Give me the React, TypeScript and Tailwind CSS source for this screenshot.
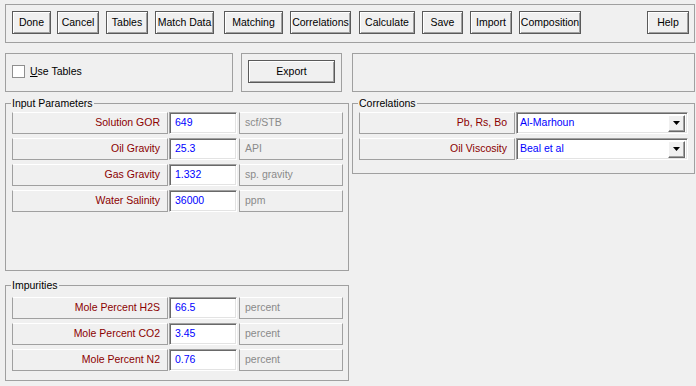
import React from 'react';

const toolbar = [
  { name: 'Done', cls: 'w-[39px]' },
  { name: 'Cancel', cls: 'w-[42px] ml-[6px]' },
  { name: 'Tables', cls: 'w-[42px] ml-[7px]' },
  { name: 'Match Data', cls: 'w-[59px] ml-[7px]' },
  { name: 'Matching', cls: 'w-[59px] ml-[10px]' },
  { name: 'Correlations', cls: 'w-[61px] ml-[7px]' },
  { name: 'Calculate', cls: 'w-[56px] ml-[8px]' },
  { name: 'Save', cls: 'w-[41px] ml-[7px]' },
  { name: 'Import', cls: 'w-[42px] ml-[7px]' },
  { name: 'Composition', cls: 'w-[62px] ml-[7px]' },
  { name: 'Help', cls: 'w-[42px] ml-auto' },
];

const inputParams = [
  { label: 'Solution GOR', value: '649', unit: 'scf/STB' },
  { label: 'Oil Gravity', value: '25.3', unit: 'API' },
  { label: 'Gas Gravity', value: '1.332', unit: 'sp. gravity' },
  { label: 'Water Salinity', value: '36000', unit: 'ppm' },
];

const impurities = [
  { label: 'Mole Percent H2S', value: '66.5', unit: 'percent' },
  { label: 'Mole Percent CO2', value: '3.45', unit: 'percent' },
  { label: 'Mole Percent N2', value: '0.76', unit: 'percent' },
];

const correlations = [
  { label: 'Pb, Rs, Bo', value: 'Al-Marhoun' },
  { label: 'Oil Viscosity', value: 'Beal et al' },
];

const Btn = ({ children, className = '' }: { children: React.ReactNode; className?: string }) => (
  <div
    className={`h-[23px] flex items-center justify-center border border-[#5a5a5a] bg-[#f0f0f0] shadow-[inset_1px_1px_0_#ffffff,inset_-1px_-1px_0_#a0a0a0] ${className}`}
  >
    {children}
  </div>
);

const Group = ({ title, className, children }: { title: string; className: string; children?: React.ReactNode }) => (
  <div className={`border border-[#a0a0a0] ${className}`}>
    <div className="-mt-[8px] ml-[5px] w-fit px-[1px] h-[14px] leading-[14px] bg-[#f0f0f0]">{title}</div>
    {children}
  </div>
);

const LabelCell = ({ text }: { text: string }) => (
  <div className="w-[156px] h-[22px] flex items-center justify-end pr-[7px] text-[#8b0000] border border-[#a0a0a0] border-t-white">
    {text}
  </div>
);

const ParamRow = ({ label, value, unit }: { label: string; value: string; unit: string }) => (
  <div className="flex h-[22px]">
    <LabelCell text={label} />
    <div className="ml-[1px] w-[68px] h-[22px] flex items-center pl-[5px] bg-white text-[#0000ff] border border-[#a0a0a0] border-b-white border-r-white shadow-[inset_1px_1px_0_#696969,inset_-1px_-1px_0_#e3e3e3]">
      {value}
    </div>
    <div className="ml-[2px] w-[104px] h-[22px] flex items-center pl-[5px] text-[#8a8a8a] border border-[#a0a0a0] border-t-white">
      {unit}
    </div>
  </div>
);

const ComboRow = ({ label, value }: { label: string; value: string }) => (
  <div className="flex h-[22px]">
    <LabelCell text={label} />
    <div className="ml-[1px] w-[172px] h-[22px] flex items-center pl-[3px] pr-[2px] bg-white text-[#0000ff] border border-[#a0a0a0] border-b-white border-r-white shadow-[inset_1px_1px_0_#696969,inset_-1px_-1px_0_#e3e3e3]">
      <span>{value}</span>
      <div className="ml-auto w-[17px] h-[17px] flex items-center justify-center bg-[#f0f0f0] border border-white border-b-[#696969] border-r-[#696969] shadow-[inset_-1px_-1px_0_#a0a0a0]">
        <svg width="7" height="4" viewBox="0 0 7 4">
          <path d="M0 0h7L3.5 4z" fill="#000" />
        </svg>
      </div>
    </div>
  </div>
);

export default function App() {
  return (
    <div className="w-[696px] h-[386px] overflow-hidden bg-[#f0f0f0] pt-[4px] pl-[5px] pr-[1px] text-[10.5px] text-black font-['Liberation_Sans',Arial,sans-serif]">
      {/* toolbar */}
      <div className="h-[39px] border border-[#a0a0a0] flex items-start pt-[6px] pl-[6px] pr-[5px]">
        {toolbar.map((b) => (
          <Btn key={b.name} className={b.cls}>
            {b.name}
          </Btn>
        ))}
      </div>

      {/* options row */}
      <div className="mt-[10px] flex gap-[3px] h-[39px]">
        <div className="w-[344px] flex">
          <div className="w-[228px] border border-[#a0a0a0] pl-[6px] pt-[11px]">
            <div className="flex items-center h-[13px]">
              <div className="w-[13px] h-[13px] bg-white border border-[#8f8f8f]" />
              <span className="ml-[5px]">
                <span className="underline">U</span>se Tables
              </span>
            </div>
          </div>
          <div className="ml-[8px] w-[101px] border border-[#a0a0a0] pt-[6px]">
            <Btn className="w-[87px] mx-auto">Export</Btn>
          </div>
        </div>
        <div className="flex-1 border border-[#a0a0a0]" />
      </div>

      {/* main */}
      <div className="mt-[11px] flex gap-[3px]">
        <div className="w-[344px] flex flex-col">
          <Group title="Input Parameters" className="h-[168px]">
            <div className="mt-[2px] pl-[6px] flex flex-col gap-[4px]">
              {inputParams.map((r) => (
                <ParamRow key={r.label} {...r} />
              ))}
            </div>
          </Group>
          <Group title="Impurities" className="mt-[14px] h-[96px]">
            <div className="mt-[5px] pl-[6px] flex flex-col gap-[4px]">
              {impurities.map((r) => (
                <ParamRow key={r.label} {...r} />
              ))}
            </div>
          </Group>
        </div>
        <div className="flex-1">
          <Group title="Correlations" className="h-[71px]">
            <div className="mt-[2px] pl-[6px] flex flex-col gap-[4px]">
              {correlations.map((r) => (
                <ComboRow key={r.label} {...r} />
              ))}
            </div>
          </Group>
        </div>
      </div>
    </div>
  );
}
